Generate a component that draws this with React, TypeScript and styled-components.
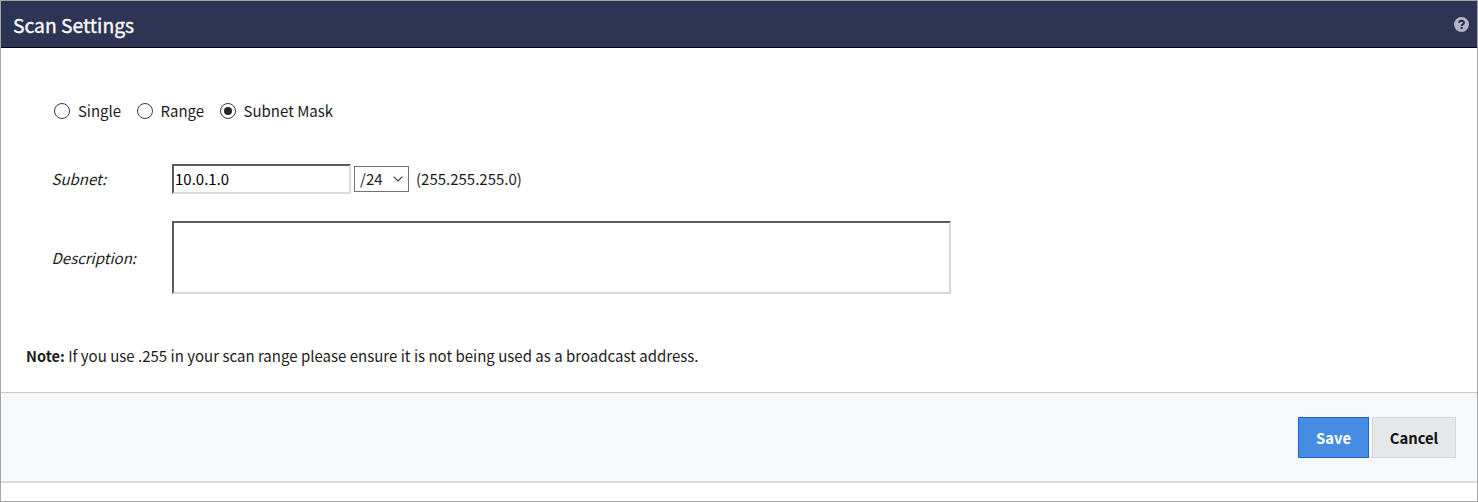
import React from 'react';
import styled, { createGlobalStyle } from 'styled-components';

const GlobalStyle = createGlobalStyle`
  *, *::before, *::after { box-sizing: border-box; }
  body {
    margin: 0;
    background: #fff;
    color: #1c1c1c;
    font-family: "Noto Sans CJK SC", "Noto Sans", sans-serif;
    font-size: 15px;
    line-height: 20px;
  }
`;

const Dialog = styled.div`
  display: flex;
  flex-direction: column;
  width: 1478px;
  height: 502px;
  border: 1px solid #a5a5a5;
  background: #fff;
`;

const Header = styled.header`
  display: flex;
  align-items: center;
  justify-content: space-between;
  height: 47px;
  padding: 0 8px 0 12px;
  background: #2e3453;
  border-bottom: 1px solid #05030f;
`;

const Title = styled.h1`
  margin: 0;
  padding-top: 1px;
  font-size: 19.3px;
  line-height: 28px;
  font-weight: 400;
  color: #fff;
  -webkit-text-stroke: 0.3px #fff;
`;

const HelpButton = styled.button`
  display: flex;
  align-items: center;
  justify-content: center;
  width: 15px;
  height: 15px;
  margin-top: 1px;
  padding: 0;
  border: 0;
  border-radius: 50%;
  background: #b1b4cb;
`;

const Body = styled.main`
  height: 345px;
  padding: 53px 25px 0;
  border-bottom: 1px solid #c9c8cc;
`;

const RadioGroup = styled.div`
  display: flex;
  gap: 15.5px;
  height: 20px;
  padding-left: 28px;
`;

const RadioLabel = styled.label`
  display: flex;
  align-items: center;
  gap: 7.5px;
`;

const Radio = styled.span<{ $checked?: boolean }>`
  display: flex;
  align-items: center;
  justify-content: center;
  width: 16.4px;
  height: 16.4px;
  border: 1px solid #3c3c3c;
  border-radius: 50%;

  &::after {
    content: "";
    width: 8px;
    height: 8px;
    border-radius: 50%;
    background: ${({ $checked }) => ($checked ? '#262626' : 'transparent')};
  }
`;

const Field = styled.div<{ $top: number }>`
  display: flex;
  align-items: center;
  margin-top: ${({ $top }) => $top}px;
  padding-left: 26px;
`;

const FieldLabel = styled.label`
  width: 120px;
  font-style: italic;
  text-indent: -0.5px;
`;

const TextInput = styled.input`
  width: 179px;
  height: 30px;
  padding: 0 0 2px 1px;
  border: 2px solid;
  border-color: #5b5b5d #dcdcdc #dcdcdc #5b5b5d;
  background: #fff;
  color: #000;
  font: inherit;
  outline: none;
`;

const TextArea = styled.textarea`
  display: block;
  width: 779px;
  height: 73px;
  border: 2px solid;
  border-color: #5b5b5d #d8d8d8 #d8d8d8 #5b5b5d;
  background: #fff;
  font: inherit;
  resize: none;
  outline: none;
`;

const Select = styled.div`
  display: flex;
  align-items: center;
  justify-content: space-between;
  width: 55px;
  height: 26px;
  margin: 0 7px 0 3px;
  padding: 0 5px;
  border: 1px solid #737377;
`;

const Note = styled.p`
  margin: 52px 0 0;
  white-space: nowrap;
  letter-spacing: 0.01px;

  b {
    font-size: 14.6px;
  }
`;

const Footer = styled.footer`
  display: flex;
  align-items: flex-start;
  justify-content: flex-end;
  gap: 3px;
  height: 90px;
  padding: 24px 21px 0 0;
  background: #f7f8fa;
  border-bottom: 2px solid #d9dbdd;
`;

const Button = styled.button<{ $primary?: boolean }>`
  width: ${({ $primary }) => ($primary ? 71 : 84)}px;
  height: 41px;
  padding: 0;
  border: 1px solid ${({ $primary }) => ($primary ? '#1c62cb' : '#d3d5d8')};
  background: ${({ $primary }) => ($primary ? '#468ce3' : '#e6e7ea')};
  color: ${({ $primary }) => ($primary ? '#fff' : '#111')};
  font: inherit;
  font-size: 14.8px;
  font-weight: 700;
`;

export default function App() {
  return (
    <>
      <GlobalStyle />
      <Dialog>
        <Header>
          <Title>Scan Settings</Title>
          <HelpButton aria-label="Help">
            <svg width="15" height="15" viewBox="0 0 15 15" fill="none">
              <path d="M5.2 5.8C5.2 3 10 3 10 5.7C10 7.3 7.6 7.2 7.6 9" stroke="#20243c" strokeWidth="1.9" />
              <rect x="6.6" y="10" width="2" height="1.9" fill="#20243c" />
            </svg>
          </HelpButton>
        </Header>
        <Body>
          <RadioGroup>
            <RadioLabel><Radio />Single</RadioLabel>
            <RadioLabel><Radio />Range</RadioLabel>
            <RadioLabel><Radio $checked />Subnet Mask</RadioLabel>
          </RadioGroup>
          <Field $top={43}>
            <FieldLabel>Subnet:</FieldLabel>
            <TextInput defaultValue="10.0.1.0" />
            <Select>
              /24
              <svg width="10" height="6" viewBox="0 0 10 6" fill="none">
                <path d="M0.7 0.7L5 4.9L9.3 0.7" stroke="#333" strokeWidth="1.1" />
              </svg>
            </Select>
            <span>(255.255.255.0)</span>
          </Field>
          <Field $top={27}>
            <FieldLabel>Description:</FieldLabel>
            <TextArea />
          </Field>
          <Note>
            <b>Note:</b> If you use .255 in your scan range please ensure it is not being used as a broadcast address.
          </Note>
        </Body>
        <Footer>
          <Button $primary>Save</Button>
          <Button>Cancel</Button>
        </Footer>
      </Dialog>
    </>
  );
}
